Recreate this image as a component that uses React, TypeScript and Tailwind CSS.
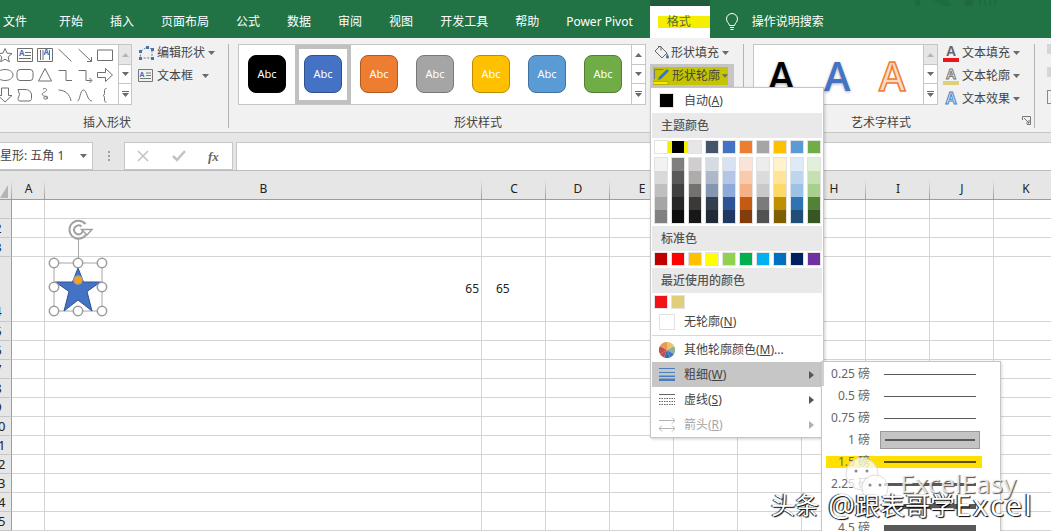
import React from "react";

const FONT = "[font-family:'Noto_Sans','Noto_Sans_CJK_SC',sans-serif]";

const TABS = [
  { label: "开始", x: "ml-[32px]" },
  { label: "插入", x: "ml-[27px]" },
  { label: "页面布局", x: "ml-[27px]" },
  { label: "公式", x: "ml-[27px]" },
  { label: "数据", x: "ml-[27px]" },
  { label: "审阅", x: "ml-[27px]" },
  { label: "视图", x: "ml-[27px]" },
  { label: "开发工具", x: "ml-[27px]" },
  { label: "帮助", x: "ml-[27px]" },
  { label: "Power Pivot", x: "ml-[27px]" },
];

const STYLE_TILES = [
  { bg: "bg-[#000000] border-[#000000]", slot: "" },
  { bg: "bg-[#4472c4] border-[#2f528f]", slot: "selected" },
  { bg: "bg-[#ed7d31] border-[#ae5a21]", slot: "" },
  { bg: "bg-[#a5a5a5] border-[#787878]", slot: "" },
  { bg: "bg-[#ffc000] border-[#bc8c00]", slot: "" },
  { bg: "bg-[#5b9bd5] border-[#41719c]", slot: "" },
  { bg: "bg-[#70ad47] border-[#507e32]", slot: "" },
];

const THEME = [
  "bg-[#ffffff]", "bg-[#000000]", "bg-[#e7e6e6]", "bg-[#44546a]", "bg-[#4472c4]",
  "bg-[#ed7d31]", "bg-[#a5a5a5]", "bg-[#ffc000]", "bg-[#5b9bd5]", "bg-[#70ad47]",
];

const SHADES = [
  ["bg-[#f2f2f2]", "bg-[#d9d9d9]", "bg-[#bfbfbf]", "bg-[#a6a6a6]", "bg-[#808080]"],
  ["bg-[#7f7f7f]", "bg-[#595959]", "bg-[#404040]", "bg-[#262626]", "bg-[#0d0d0d]"],
  ["bg-[#d0cece]", "bg-[#aeabab]", "bg-[#757171]", "bg-[#3b3838]", "bg-[#181717]"],
  ["bg-[#d6dce4]", "bg-[#adb9ca]", "bg-[#8497b0]", "bg-[#333f4f]", "bg-[#222b35]"],
  ["bg-[#d9e2f3]", "bg-[#b4c6e7]", "bg-[#8eaadb]", "bg-[#2f5496]", "bg-[#1f3864]"],
  ["bg-[#fbe4d5]", "bg-[#f7cbac]", "bg-[#f4b183]", "bg-[#c55a11]", "bg-[#833c0b]"],
  ["bg-[#ededed]", "bg-[#dbdbdb]", "bg-[#c9c9c9]", "bg-[#7b7b7b]", "bg-[#525252]"],
  ["bg-[#fff2cc]", "bg-[#fee599]", "bg-[#ffd965]", "bg-[#bf8f00]", "bg-[#7f6000]"],
  ["bg-[#deeaf6]", "bg-[#bdd6ee]", "bg-[#9cc2e5]", "bg-[#2e74b5]", "bg-[#1f4e79]"],
  ["bg-[#e2efd9]", "bg-[#c5e0b3]", "bg-[#a8d08d]", "bg-[#538135]", "bg-[#375623]"],
];

const STANDARD = [
  "bg-[#c00000]", "bg-[#ff0000]", "bg-[#ffc000]", "bg-[#ffff00]", "bg-[#92d050]",
  "bg-[#00b050]", "bg-[#00b0f0]", "bg-[#0070c0]", "bg-[#002060]", "bg-[#7030a0]",
];

const COLUMNS = [
  { label: "A", w: "w-[33px]" },
  { label: "B", w: "w-[437px]" },
  { label: "C", w: "w-[64px]" },
  { label: "D", w: "w-[64px]" },
  { label: "E", w: "w-[64px]" },
  { label: "F", w: "w-[64px]" },
  { label: "G", w: "w-[64px]" },
  { label: "H", w: "w-[64px]" },
  { label: "I", w: "w-[64px]" },
  { label: "J", w: "w-[64px]" },
  { label: "K", w: "w-[64px]" },
];

const ROWS = [1, 2, 3, 4, 5, 6, 7, 8, 9, 10, 11, 12, 13, 14, 15, 16];

const WEIGHTS = [
  { label: "0.25 磅", line: "h-px bg-[#595959]" },
  { label: "0.5 磅", line: "h-px bg-[#595959]" },
  { label: "0.75 磅", line: "h-px bg-[#595959]" },
  { label: "1 磅", line: "h-[2px] bg-[#595959]", boxed: true },
  { label: "1.5 磅", line: "h-[2px] bg-[#5a4e00]", marked: true },
  { label: "2.25 磅", line: "h-[3px] bg-[#595959]" },
  { label: "3 磅", line: "h-[5px] bg-[#595959]" },
  { label: "4.5 磅", line: "h-[7px] bg-[#595959]" },
];

function Caret({ className = "" }: { className?: string }) {
  return (
    <svg width="7" height="4" viewBox="0 0 7 4" className={className}>
      <path d="M0 0h7L3.5 4z" fill="#6a6a6a" />
    </svg>
  );
}

function ShapeIcon({ d, extra }: { d: string; extra?: React.ReactNode }) {
  return (
    <svg width="20" height="20" viewBox="0 0 20 20" fill="none" stroke="#6f6f6f" strokeWidth="1">
      <path d={d} />
      {extra}
    </svg>
  );
}

const SHAPES: { d: string; extra?: React.ReactNode }[] = [
  { d: "M10 3.500l2 4.600 5 .5-3.800 3.300 1.100 4.900L10 14.200 5.700 16.800l1.100-4.900L3 8.600l5-.5z" },
  {
    d: "M2.500 3.500h15v13h-15z M10 7.500h6 M10 10.500h6 M4 13.500h12",
    extra: <text x="4" y="11" fontSize="8" fontWeight="700" fill="#4472c4" stroke="none">A</text>,
  },
  {
    d: "M2.500 3.500h15v13h-15z M5.500 5v10 M8 5v10 M14.500 5v10",
    extra: <text x="8.500" y="10" fontSize="8" fontWeight="700" fill="#4472c4" stroke="none">A</text>,
  },
  { d: "M3.500 4l13 12.500" },
  { d: "M3.500 4l13 12.500M16.500 12v4.500H12" },
  { d: "M2.500 5h15v10.500h-15z" },
  { d: "M18 10c0 3.300-3.600 5.500-8 5.500S2 13.300 2 10s3.600-5.500 8-5.500 8 2.200 8 5.500z" },
  { d: "M5 4.500h10a3 3 0 0 1 3 3v5a3 3 0 0 1-3 3H5a3 3 0 0 1-3-3v-5a3 3 0 0 1 3-3z" },
  { d: "M10 3.500l6.500 12.500h-13z" },
  { d: "M3.500 5.500h7.500v10h6" },
  { d: "M3.500 5.500h7.500v10h5.500M14.500 13l2.500 2.500-2.500 2.500" },
  { d: "M2.500 7.500h8V3.500l7 6.500-7 6.500v-4h-8z" },
  { d: "M6.500 3h7v7.500h3.500l-7 6.500-7-6.500h3.500z" },
  { d: "M3 4.500h7c4 0 6.500 2.500 6.500 5.500v3.500c0 1.500-1 2.500-2.500 2.500H5c-1.500 0-2-1-2-2.500l1.500-4z" },
  { d: "M8 4c3-1.500 5 1 2.500 2.500S6 9 8 10.500s5 0 4.500 2-3.500 2.500-3.500.5 3-2 3.500 1" },
  { d: "M3.500 5c6.500 0 11.500 4.500 12.500 11" },
  { d: "M2.500 16c2.500 0 2.500-11 6-11s3.500 11 8.500 11" },
  { d: "M11.500 3.500c-2 0-2 1-2 3.500s0 3-1.500 3.500c1.500.5 1.500 1 1.500 3.500s0 3 2 3" },
];

function Scroller({ disabledUp }: { disabledUp?: boolean }) {
  return (
    <div className="flex w-[14px] shrink-0 flex-col border-l border-[#c6c6c6] bg-white">
      <div className={`flex h-[20px] items-center justify-center border-b border-[#c6c6c6] ${disabledUp ? "bg-[#e6e6e6]" : ""}`}>
        <svg width="7" height="4" viewBox="0 0 7 4"><path d="M0 4h7L3.500 0z" fill={disabledUp ? "#b5b5b5" : "#6a6a6a"} /></svg>
      </div>
      <div className="flex h-[19px] items-center justify-center border-b border-[#c6c6c6]">
        <Caret />
      </div>
      <div className="flex flex-1 flex-col items-center justify-center gap-px">
        <div className="h-px w-[7px] bg-[#6a6a6a]" />
        <Caret />
      </div>
    </div>
  );
}

function SmallAction({ icon, label, caret = "ml-[4px]" }: { icon: React.ReactNode; label: string; caret?: string }) {
  return (
    <div className="flex h-[23px] items-center">
      <div className="flex w-[19px] shrink-0 items-center">{icon}</div>
      <span>{label}</span>
      <Caret className={caret} />
    </div>
  );
}

function MenuHeader({ children }: { children: React.ReactNode }) {
  return <div className="mx-px flex h-[25px] items-center bg-[#e9e9e9] pl-[9px] pt-[1px] font-medium text-[#555]">{children}</div>;
}

function Swatch({ color, highlight }: { color: string; highlight?: boolean }) {
  return <div className={`h-[12px] w-[12px] ${color} ${highlight ? "" : "outline outline-[#e2e2e2]"}`} />;
}

function MenuItem({
  icon,
  children,
  arrow,
  active,
  muted,
}: {
  icon: React.ReactNode;
  children: React.ReactNode;
  arrow?: boolean;
  active?: boolean;
  muted?: boolean;
}) {
  return (
    <div className={`mx-px flex h-[25px] items-center ${active ? "bg-[#c6c6c6]" : ""} ${muted ? "text-[#a6a6a6]" : ""}`}>
      <div className="flex w-[32px] shrink-0 justify-center pl-[2px] pr-[5px]">{icon}</div>
      <div className="flex-1">{children}</div>
      {arrow && (
        <svg width="5" height="8" viewBox="0 0 5 8" className="mr-[8px]">
          <path d="M0 0l5 4-5 4z" fill={muted ? "#b0b0b0" : "#555"} />
        </svg>
      )}
    </div>
  );
}

export default function App() {
  return (
    <div className={`relative h-[531px] w-[1051px] overflow-hidden bg-white text-[12px] leading-none text-[#444] ${FONT}`}>
      {/* tabs */}
      <div className="relative flex h-[38px] items-center bg-[#217346] pl-[3px] text-white">
        <span className="pt-[6px]">文件</span>
        {TABS.map((t) => (
          <span key={t.label} className={`${t.x} whitespace-nowrap pt-[6px]`}>{t.label}</span>
        ))}
        <div className="ml-[17px] flex h-full w-[60px] flex-col bg-white">
          <div className="h-[6px] bg-[#1e5c3c]" />
          <div className="flex flex-1 items-center">
            <span className="ml-[8px] flex h-[12px] flex-1 items-center bg-[#f5ee00] pl-[9px] text-[#5a6b35]">格式</span>
          </div>
        </div>
        <svg width="14" height="18" viewBox="0 0 14 18" fill="none" stroke="white" strokeWidth="1" className="ml-[15px] mt-[6px]">
          <path d="M4.500 12.500C4 10 1.500 9 1.500 6a5.500 5.500 0 0 1 11 0c0 3-2.500 4-3 6.500z" />
          <path d="M5 14.500h4M5.500 16.500h3" />
        </svg>
        <span className="ml-[13px] pt-[6px]">操作说明搜索</span>
        <svg width="90" height="6" viewBox="0 0 90 6" className="absolute left-[915px] top-0" fill="#1f6a41">
          <path d="M0 0h5v6H0z M18 0h14l6 6H28z M50 0h8v6h-8z M64 0h2v6h-2z M69 0h2v6h-2z M74 0h2v6h-2z M79 0h2v6h-2z" />
        </svg>
      </div>

      {/* ribbon */}
      <div className="flex h-[95px] border-b border-[#c6c6c6] bg-[#f1f1f1] pt-[6px] text-[#444]">
        <div className="relative mb-[4px] flex w-[229px] shrink-0 border-r border-[#b4b4b4]">
          <div className="flex h-[61px] w-[132px] shrink-0 overflow-hidden border border-l-0 border-[#c6c6c6] bg-white">
            <div className="-ml-[5px] grid h-full w-[123px] shrink-0 grid-cols-[repeat(6,20px)] content-center pt-[1px]">
              {SHAPES.map((s, i) => (
                <ShapeIcon key={i} d={s.d} extra={s.extra} />
              ))}
            </div>
            <Scroller disabledUp />
          </div>
          <div className="-mt-[3px] ml-[6px] flex flex-col">
            <SmallAction
              label="编辑形状"
              caret="ml-[3px]"
              icon={
                <svg width="16" height="16" viewBox="0 0 16 16" fill="none">
                  <path d="M3 6l6-4 5 2v9H2z" stroke="#777" strokeDasharray="2 1.500" />
                  <path d="M1 5h3v3H1z M8 1h3v3H8z M13 3h3v3h-3z M13 12h3v3h-3z M1 12h3v3H1z" fill="#3f75b5" />
                </svg>
              }
            />
            <SmallAction
              label="文本框"
              caret="ml-[9px]"
              icon={
                <svg width="15" height="13" viewBox="0 0 15 13" fill="none" stroke="#777">
                  <path d="M.5.500h14v12H.5z M8 4h5M8 6.500h5M2 9.500h11" />
                  <text x="1.500" y="7.500" fontSize="7" fontWeight="700" fill="#4472c4" stroke="none">A</text>
                </svg>
              }
            />
          </div>
          <span className="absolute left-[83px] top-[73px]">插入形状</span>
        </div>

        <div className="relative mb-[4px] flex w-[515px] shrink-0 border-r border-[#b4b4b4] pl-[9px]">
          <div className="flex h-[61px] w-[408px] shrink-0 border border-[#c6c6c6] bg-white">
            <div className="flex flex-1">
              {STYLE_TILES.map((t, i) => (
                <div
                  key={i}
                  className={`flex w-[56px] shrink-0 items-center justify-center pb-[1px] ${t.slot === "selected" ? "border-[4px] border-[#c0c0c0]" : ""}`}
                >
                  <div className={`flex h-[38px] w-[38px] items-center justify-center rounded-[8px] border pb-[2px] text-[11px] text-white ${t.bg}`}>
                    Abc
                  </div>
                </div>
              ))}
            </div>
            <Scroller />
          </div>
          <div className="ml-[5px] flex flex-col">
            <div className="flex h-[18px] items-center pl-[2px]">
              <svg width="17" height="16" viewBox="0 0 17 16" fill="none" className="mr-[1px] shrink-0">
                <path d="M7 1l7 7-5 5-7-7z" stroke="#666" />
                <path d="M5 1.500h3v4" stroke="#666" />
                <path d="M14 8l2 4a1.500 1.500 0 0 1-3 0z" fill="#3f75b5" />
              </svg>
              <span className="whitespace-nowrap">形状填充</span>
              <Caret className="ml-[3px]" />
            </div>
          </div>
          <span className="absolute left-[225px] top-[73px]">形状样式</span>
        </div>

        <div className="relative mb-[4px] flex w-[291px] shrink-0 border-r border-[#b4b4b4] pl-[9px]">
          <div className="flex h-[61px] w-[185px] shrink-0 overflow-hidden border border-[#c6c6c6] bg-white">
            <div className="flex flex-1 items-center pl-[14px] pt-[2px] font-['Open_Sans',sans-serif] text-[40px] font-semibold leading-[58px]">
              <span className="w-[56px] text-black [text-shadow:0_1px_3px_#999]">A</span>
              <span className="w-[55px] text-[#4472c4] [text-shadow:0_1px_3px_#aaa]">A</span>
              <span className="text-[#fbd9c2] [-webkit-text-stroke:1.5px_#ed7d31]">A</span>
            </div>
            <Scroller disabledUp />
          </div>
          <div className="-mt-[3px] ml-[5px] flex flex-col">
            <SmallAction
              label="文本填充"
              caret="ml-[3px]"
              icon={
                <span className="relative block h-[18px] w-[16px]">
                  <span className="block text-center font-['Liberation_Sans',sans-serif] text-[14px] font-bold text-[#666]">A</span>
                  <span className="absolute bottom-0 left-0 h-[4px] w-[16px] bg-[#f01418]" />
                </span>
              }
            />
            <SmallAction
              label="文本轮廓"
              caret="ml-[3px]"
              icon={
                <span className="relative block h-[18px] w-[16px]">
                  <span className="block text-center font-['Liberation_Sans',sans-serif] text-[14px] font-bold text-white [-webkit-text-stroke:1px_#777]">A</span>
                  <span className="absolute bottom-0 left-0 h-[4px] w-[16px] bg-[#dfcf7a]" />
                </span>
              }
            />
            <SmallAction
              label="文本效果"
              caret="ml-[3px]"
              icon={
                <span className="block w-[16px] text-center font-['Liberation_Sans',sans-serif] text-[16px] font-bold text-[#dce9f7] [-webkit-text-stroke:1px_#4a86c5]">A</span>
              }
            />
          </div>
          <span className="absolute left-[107px] top-[73px]">艺术字样式</span>
          <svg width="9" height="9" viewBox="0 0 9 9" fill="none" stroke="#777" className="absolute bottom-[3px] right-[3px]">
            <path d="M.5 4V.5H8.500V8.500H5M2 2l5 5M7 4v3H4" />
          </svg>
        </div>

        <div className="ml-[12px] flex flex-col gap-[13px]">
          <div className="h-[10px] w-[8px] bg-[#d6d6d6]" />
          <div className="h-[10px] w-[8px] bg-[#d6d6d6]" />
          <div className="h-[14px] w-[8px] border border-[#8a8a8a]" />
        </div>
      </div>

      {/* formula bar */}
      <div className="flex h-[38px] items-start border-b border-[#bdbdbd] bg-[#e6e6e6] pt-[9px]">
        <div className="flex h-[28px] w-[93px] shrink-0 items-center justify-between whitespace-nowrap border border-l-0 border-[#c6c6c6] bg-white pr-[5px]">
          <span>星形: 五角 1</span>
          <Caret />
        </div>
        <div className="flex h-[28px] w-[31px] shrink-0 flex-col items-center justify-center gap-[2px]">
          <div className="h-[2px] w-[2px] bg-[#a0a0a0]" />
          <div className="h-[2px] w-[2px] bg-[#a0a0a0]" />
          <div className="h-[2px] w-[2px] bg-[#a0a0a0]" />
        </div>
        <div className="flex h-[28px] w-[109px] shrink-0 items-center border border-[#c6c6c6] bg-white">
          <svg width="12" height="12" viewBox="0 0 12 12" stroke="#c2c2c2" strokeWidth="1.500" className="ml-[12px]">
            <path d="M1 1l10 10M11 1L1 11" />
          </svg>
          <svg width="14" height="12" viewBox="0 0 14 12" fill="none" stroke="#c2c2c2" strokeWidth="2.500" className="ml-[23px]">
            <path d="M1 6l4 4 8-9" />
          </svg>
          <span className="ml-[22px] font-['Liberation_Serif',serif] text-[13px] font-bold italic text-[#666]">fx</span>
        </div>
        <div className="ml-[3px] h-[28px] flex-1 border-l border-t border-[#c6c6c6] bg-white" />
      </div>

      {/* sheet */}
      <div className="flex h-[29px] w-[1058px] bg-[#e6e6e6]">
        <div className="relative w-[12px] shrink-0 border-b border-b-[#9d9d9d] bg-[linear-gradient(#e6e6e6_30%,#9d9d9d)] bg-[length:1px_100%] bg-right bg-no-repeat">
          <svg width="9" height="13" viewBox="0 0 9 13" className="absolute bottom-px left-0">
            <path d="M8 0v13H0z" fill="#b4b4b4" />
          </svg>
        </div>
        {COLUMNS.map((c) => (
          <div
            key={c.label}
            className={`${c.w} flex shrink-0 items-center justify-center border-b border-b-[#9d9d9d] bg-[linear-gradient(#e6e6e6_30%,#9d9d9d)] bg-[length:1px_100%] bg-right bg-no-repeat pt-[8px] text-[#222]`}
          >
            {c.label}
          </div>
        ))}
      </div>
      {ROWS.map((r) => (
        <div key={r} className={`flex w-[1058px] ${r === 4 ? "h-[65px]" : "h-[19px]"}`}>
          <div className={`flex w-[12px] shrink-0 overflow-hidden border-b border-r border-b-[#c6c6c6] border-r-[#9d9d9d] bg-[#e6e6e6] text-[#222] ${r === 4 ? "items-end pb-[3px]" : "items-center"}`}>
            <span className="-ml-[15px] w-[26px] shrink-0 text-center text-[13px]">{r === 1 ? "" : r}</span>
          </div>
          {COLUMNS.map((c) => (
            <div
              key={c.label}
              className={`${c.w} flex shrink-0 items-center border-b border-r border-[#d4d4d4] text-[12px] text-[#222] ${c.label === "B" ? "justify-end pr-[2px]" : "pl-[14px]"}`}
            >
              {r === 4 && (c.label === "B" || c.label === "C") ? "65" : ""}
            </div>
          ))}
        </div>
      ))}

      {/* selected shape */}
      <svg width="70" height="100" viewBox="0 0 70 100" fill="none" className="absolute left-[44px] top-[218px]">
        <path d="M41.500 6A9 9 0 1 0 43.500 12" stroke="#a0a0a0" strokeWidth="2" />
        <path d="M37.500 8.500A4.500 4.500 0 1 0 39 12" stroke="#a0a0a0" strokeWidth="2" />
        <path d="M37.500 11.500H48l-5 5.500z" fill="#fff" stroke="#a0a0a0" strokeWidth="1.500" />
        <path d="M34.500 21v24M10 45h48v48H10z" stroke="#a6a6a6" />
        <path
          d="M34 50l5.500 14H56.500l-13.500 9.500 5 19.500-14-11-14 11 5-19.500L11.500 64H28.500z"
          fill="#4472c4"
          stroke="#2f528f"
        />
        {[
          [10, 45], [34, 45], [58, 45], [10, 69], [58, 69], [10, 93], [34, 93], [58, 93],
        ].map(([cx, cy]) => (
          <circle key={`${cx}-${cy}`} cx={cx} cy={cy} r="4.700" fill="#fff" stroke="#9a9a9a" strokeWidth="1.500" />
        ))}
        <circle cx="34" cy="62" r="4.200" fill="#f5a31a" stroke="#a0a0a0" strokeWidth="1.200" />
      </svg>

      {/* outline dropdown */}
      <div className="absolute left-[650px] top-[64px] flex h-[23px] w-[84px] items-center bg-[#c6c6c6]">
        <div className="ml-[3px] flex h-[18px] w-[75px] items-center whitespace-nowrap bg-[#c4c400]">
          <svg width="18" height="18" viewBox="0 0 18 18" fill="none" className="shrink-0">
            <path d="M1.500 12V2.500h9" stroke="#777" />
            <path d="M14 2l2 2-8 8-3 1 1-3z" fill="#3f75b5" />
            <path d="M0 14.500h15v3H0z" fill="#ffe600" stroke="#8a8a00" strokeWidth=".5" />
          </svg>
          <span className="ml-[1px]">形状轮廓</span>
          <Caret className="ml-[2px]" />
        </div>
      </div>
      <div className="absolute left-[650px] top-[87px] h-[351px] w-[174px] border border-[#c6c6c6] bg-white shadow-[1px_1px_3px_rgba(0,0,0,0.2)]">
        <MenuItem icon={<div className="h-[15px] w-[15px] border border-[#e2e2e2] bg-black outline outline-white" />}>
          自动(<u>A</u>)
        </MenuItem>
        <MenuHeader>主题颜色</MenuHeader>
        <div className="relative flex gap-[5px] pl-[4px] pt-[3px]">
          <div className="absolute left-[13px] top-[3px] h-[12px] w-[26px] bg-[#f5ee00]" />
          {THEME.map((c, i) => (
            <div key={c} className="relative">
              {i === 1 ? <div className={`mx-auto h-[12px] w-[12px] ${c}`} /> : <Swatch color={c} />}
            </div>
          ))}
        </div>
        <div className="flex gap-[5px] pl-[4px] pt-[5px]">
          {SHADES.map((col, i) => (
            <div key={i} className="flex w-[12px] flex-col outline outline-[#e2e2e2]">
              {col.map((c) => (
                <div key={c} className={`h-[13px] ${c}`} />
              ))}
            </div>
          ))}
        </div>
        <div className="pt-[3px]">
          <MenuHeader>标准色</MenuHeader>
        </div>
        <div className="flex gap-[5px] pl-[4px] pt-[2px]">
          {STANDARD.map((c) => (
            <Swatch key={c} color={c} />
          ))}
        </div>
        <div className="pt-[3px]">
          <MenuHeader>最近使用的颜色</MenuHeader>
        </div>
        <div className="flex gap-[5px] pl-[4px] pt-[3px]">
          <Swatch color="bg-[#f01418]" />
          <Swatch color="bg-[#dfcf7a]" />
        </div>
        <div className="pt-[1px] pb-[1px]">
          <MenuItem icon={<div className="h-[16px] w-[16px] border border-[#e2e2e2] bg-white" />}>
            无轮廓(<u>N</u>)
          </MenuItem>
        </div>
        <div className="mx-px mb-px h-px bg-[#d8d8d8]" />
        <MenuItem
          icon={
            <svg width="16" height="16" viewBox="0 0 16 16">
              <path d="M8 8V0a8 8 0 0 1 7 4z" fill="#e9c46a" />
              <path d="M8 8l7-4a8 8 0 0 1 0 8z" fill="#8fb39a" />
              <path d="M8 8l7 4a8 8 0 0 1-4 3.500z" fill="#4472c4" />
              <path d="M8 8l3 7.500a8 8 0 0 1-6 0z" fill="#2e74b5" />
              <path d="M8 8l-3 7.500A8 8 0 0 1 1 12z" fill="#c0504d" />
              <path d="M8 8L1 12a8 8 0 0 1 0-8z" fill="#c0504d" />
              <path d="M8 8L1 4a8 8 0 0 1 7-4z" fill="#e99a4a" />
            </svg>
          }
        >
          其他轮廓颜色(<u>M</u>)...
        </MenuItem>
        <MenuItem
          active
          arrow
          icon={
            <svg width="16" height="13" viewBox="0 0 16 13">
              <path d="M0 0h16v1H0zM0 4h16v1H0z" fill="#4a7ebb" />
              <path d="M0 7.500h16v1.500H0z" fill="#4a7ebb" />
              <path d="M0 10.500h16V13H0z" fill="#4a7ebb" />
            </svg>
          }
        >
          粗细(<u>W</u>)
        </MenuItem>
        <MenuItem
          arrow
          icon={
            <svg width="16" height="11" viewBox="0 0 16 11" stroke="#666">
              <path d="M0 .5h16" />
              <path d="M0 4.500h16M0 7.500h16M0 10.500h16" strokeDasharray="1.500 1" />
            </svg>
          }
        >
          虚线(<u>S</u>)
        </MenuItem>
        <MenuItem
          arrow
          muted
          icon={
            <svg width="16" height="15" viewBox="0 0 16 15" fill="none" stroke="#b5b5b5">
              <path d="M0 3.500h16M13 .5l3 3-3 3M0 11.500h16M3 8.500l-3 3 3 3M13 8.500l3 3-3 3" />
            </svg>
          }
        >
          箭头(<u>R</u>)
        </MenuItem>
      </div>

      {/* weight submenu */}
      <div className="absolute left-[821px] top-[361px] h-[180px] w-[180px] border border-[#c6c6c6] bg-white pt-px shadow-[1px_1px_3px_rgba(0,0,0,0.15)]">
        <div className="absolute left-0 top-0 h-[24px] w-[2px] bg-[#d0d0d0]" />
        {WEIGHTS.map((w) => (
          <div key={w.label} className="relative flex h-[22px] items-center">
            {w.marked && <div className="absolute left-[4px] top-[5px] h-[12px] w-[156px] bg-[#ffe000]" />}
            <span className="relative w-[48px] whitespace-nowrap text-right text-[#666]">{w.label}</span>
            <div className={`relative ml-[10px] flex h-[18px] w-[100px] items-center px-[4px] ${w.boxed ? "border border-[#999] bg-[#c4c4c4]" : ""}`}>
              <div className={`w-full ${w.line}`} />
            </div>
          </div>
        ))}
      </div>

      {/* watermark */}
      <svg width="44" height="44" viewBox="0 0 44 44" className="absolute left-[845px] top-[458px]">
        <circle cx="17" cy="16" r="16" fill="#ffffff" fillOpacity=".75" stroke="#dddddd" />
        <circle cx="30" cy="30" r="13" fill="#ffffff" fillOpacity=".75" stroke="#dddddd" />
        <circle cx="11" cy="13" r="1.500" fill="#888" />
        <circle cx="22" cy="13" r="1.500" fill="#888" />
        <circle cx="25" cy="27" r="1.500" fill="#888" />
        <circle cx="35" cy="27" r="1.500" fill="#888" />
      </svg>
      <span className="absolute left-[900px] top-[469px] whitespace-nowrap text-[26px] leading-[28px] text-[#ffffffcc] [text-shadow:1px_1px_1px_#555]">
        ExcelEasy
      </span>
      <span className="absolute left-[771px] top-[491px] flex items-center gap-[9px] whitespace-nowrap leading-[28px] text-white [text-shadow:1px_1px_1px_#000,-1px_0_1px_#000]">
        <span className="text-[24px]">头条</span>
        <span className="flex items-center">
          <span className="text-[30px]">@</span>
          <span className="text-[25px]">跟表哥学</span>
          <span className="text-[29px] tracking-[2px]">Excel</span>
        </span>
      </span>
    </div>
  );
}
